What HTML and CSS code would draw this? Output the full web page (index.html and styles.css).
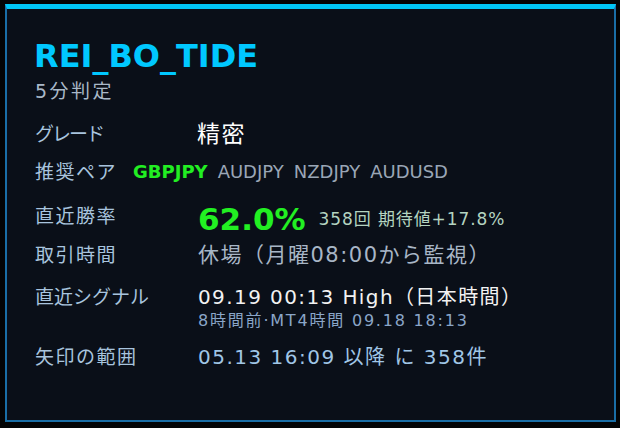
FILE: index.html
```html
<!DOCTYPE html>
<html lang="ja">
<head>
<meta charset="utf-8">
<link rel="stylesheet" href="styles.css">
</head>
<body>
<div class="card">
  <div class="title">REI_BO_TIDE</div>
  <div class="subtitle">5分判定</div>
  <div class="rows">
    <div class="row row-grade">
      <div class="label label-kana">グレード</div>
      <div class="value grade">精密</div>
    </div>
    <div class="row row-pairs">
      <div class="label">推奨ペア</div>
      <div class="pairs"><span class="pair-main">GBPJPY</span><span class="pair">AUDJPY</span><span class="pair">NZDJPY</span><span class="pair">AUDUSD</span></div>
    </div>
    <div class="row row-rate">
      <div class="label">直近勝率</div>
      <div class="value rate"><span class="rate-big">62.0%</span><span class="rate-sub">358回 期待値+17.8%</span></div>
    </div>
    <div class="row row-hours">
      <div class="label">取引時間</div>
      <div class="value hours">休場（月曜08:00から監視）</div>
    </div>
    <div class="row row-signal">
      <div class="label label-signal">直近シグナル</div>
      <div class="value">
        <div class="signal">09.19 00:13 High（日本時間）</div>
        <div class="signal-sub">8時間前·MT4時間 09.18 18:13</div>
      </div>
    </div>
    <div class="row row-range">
      <div class="label">矢印の範囲</div>
      <div class="value range">05.13 16:09 以降 に 358件</div>
    </div>
  </div>
</div>
</body>
</html>
```
FILE: styles.css
```css
html, body {
  margin: 0;
  padding: 0;
  background: #030405;
}
body {
  width: 620px;
  height: 428px;
  padding: 4px 4px 6px 5px;
  box-sizing: border-box;
  font-family: "DejaVu Sans", "Noto Sans CJK JP", sans-serif;
}
.card {
  height: 100%;
  box-sizing: border-box;
  background: #0a0f18;
  border: 2px solid #1a6ea6;
  border-top: 5px solid #00c6f6;
  padding: 29px 0 0 28px;
}
.title {
  color: #00c8ff;
  font-weight: bold;
  font-size: 32px;
  line-height: 36px;
  margin-left: -1px;
}
.subtitle {
  margin-top: 5px;
  color: #a9b8c8;
  font-size: 19px;
  line-height: 24px;
  letter-spacing: 2.5px;
}
.rows {
  margin-top: 12px;
  display: flex;
  flex-direction: column;
}
.row {
  display: grid;
  grid-template-columns: 163px 1fr;
  align-items: center;
}
.row-grade { height: 38px; line-height: 38px; }
.row-pairs { height: 38px; line-height: 38px; grid-template-columns: 98px 1fr; }
.row-rate { height: 50px; line-height: 50px; }
.row-hours { height: 28px; line-height: 28px; }
.row-signal { align-items: start; line-height: 56px; }
.row-range { height: 56px; line-height: 56px; }
.label {
  color: #a8c4de;
  font-size: 19px;
  letter-spacing: 1.5px;
  white-space: nowrap;
}
.label-kana {
  letter-spacing: -2px;
}
.label-signal {
  letter-spacing: 0;
}
.value {
  color: #a8b6c6;
  white-space: nowrap;
}
.grade {
  color: #ffffff;
  font-size: 23px;
  letter-spacing: 1.5px;
  margin-left: -1px;
}
.pairs {
  display: flex;
  gap: 10px;
  font-size: 18px;
  color: #9aa6b6;
}
.pair-main {
  color: #22ee22;
  font-weight: bold;
}
.rate {
  display: flex;
  align-items: center;
  gap: 13px;
  padding-top: 6px;
  line-height: 36px;
}
.rate-big {
  color: #22f022;
  font-weight: bold;
  font-size: 31px;
}
.rate-sub {
  color: #b4d4c0;
  font-size: 17px;
  letter-spacing: 0.9px;
}
.hours {
  font-size: 21px;
  letter-spacing: 1.5px;
}
.signal {
  color: #f2f2f2;
  font-size: 20px;
  letter-spacing: 1.4px;
}
.signal-sub {
  color: #8aa6c8;
  font-size: 16px;
  letter-spacing: 1.8px;
  line-height: 16px;
  margin-top: -12px;
}
.range {
  color: #a0c6e6;
  font-size: 20px;
  letter-spacing: 1.5px;
}
```
